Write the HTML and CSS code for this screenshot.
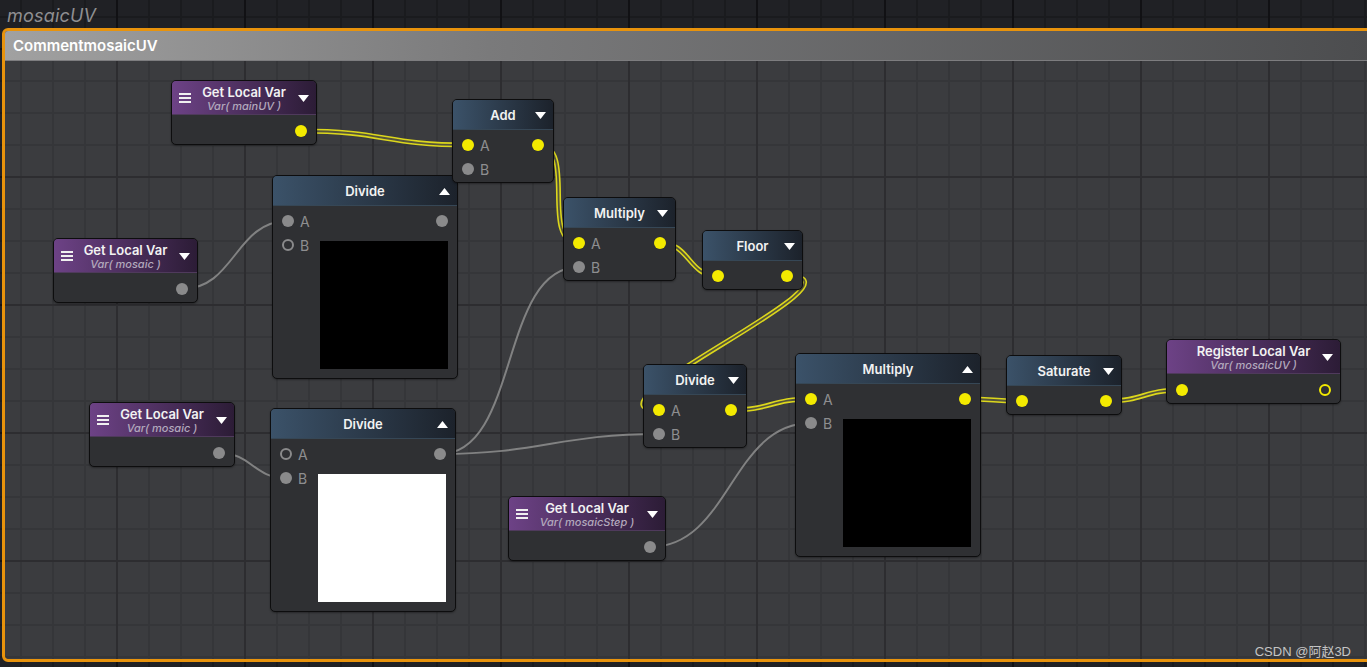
FILE: index.html
```html
<!DOCTYPE html>
<html>
<head>
<meta charset="utf-8">
<link rel="stylesheet" href="styles.css">
</head>
<body>
<div class="canvas">
  <div class="graph-title">mosaicUV</div>
  <div class="comment">
    <div class="comment-hdr">CommentmosaicUV</div>
  </div>

  <svg class="wires" width="1367" height="667" viewBox="0 0 1367 667">
    <g class="gray">
      <path d="M182,289 C235,289 235,221 288,221"/>
      <path d="M442,221 C460,221 450,169 468,169"/>
      <path d="M219,453 C252,453 253,478 286,478"/>
      <path d="M440,454 C520,454 499,267 579,267"/>
      <path d="M440,454 C540,454 559,434 659,434"/>
      <path d="M650,547 C730,547 731,423 811,423"/>
    </g>
    <g class="yel-outer">
      <path d="M301,131 C385,131 384,145 468,145"/>
      <path d="M538,145 C578,145 539,243 579,243"/>
      <path d="M660,243 C690,243 688,276 718,276"/>
      <path d="M787,276 C880,276 570,410 659,410"/>
      <path d="M731,410 C771,410 771,399 811,399"/>
      <path d="M965,399 C995,399 992,401 1022,401"/>
      <path d="M1106,401 C1146,401 1142,390 1182,390"/>
    </g>
    <g class="yel-inner">
      <path d="M301,131 C385,131 384,145 468,145"/>
      <path d="M538,145 C578,145 539,243 579,243"/>
      <path d="M660,243 C690,243 688,276 718,276"/>
      <path d="M787,276 C880,276 570,410 659,410"/>
      <path d="M731,410 C771,410 771,399 811,399"/>
      <path d="M965,399 C995,399 992,401 1022,401"/>
      <path d="M1106,401 C1146,401 1142,390 1182,390"/>
    </g>
  </svg>

  <!-- Get Local Var mainUV -->
  <div class="node n-mainuv">
    <div class="hdr purple">
      <span class="menu"><i></i><i></i><i></i></span>
      <span class="titles"><span class="title">Get Local Var</span><span class="sub">Var( mainUV )</span></span>
      <span class="arrow"><svg width="11" height="7" viewBox="0 0 11 7"><polygon points="0,0 11,0 5.5,7"/></svg></span>
    </div>
    <div class="body pbody">
      <div class="row"><span class="grow"></span><span class="pin y"></span></div>
    </div>
  </div>

  <!-- Divide top -->
  <div class="node n-divtop">
    <div class="hdr blue">
      <span></span><span class="title">Divide</span>
      <span class="arrow"><svg width="11" height="7" viewBox="0 0 11 7"><polygon points="0,7 11,7 5.5,0"/></svg></span>
    </div>
    <div class="body">
      <div class="row"><span class="pin g"></span><span class="lbl">A</span><span class="grow"></span><span class="pin g"></span></div>
      <div class="split">
        <div class="col"><div class="row"><span class="pin ring"></span><span class="lbl">B</span></div></div>
        <div class="preview black"></div>
      </div>
    </div>
  </div>

  <!-- Add -->
  <div class="node n-add">
    <div class="hdr blue">
      <span></span><span class="title">Add</span>
      <span class="arrow"><svg width="11" height="7" viewBox="0 0 11 7"><polygon points="0,0 11,0 5.5,7"/></svg></span>
    </div>
    <div class="body">
      <div class="row"><span class="pin y"></span><span class="lbl">A</span><span class="grow"></span><span class="pin y"></span></div>
      <div class="row"><span class="pin g"></span><span class="lbl">B</span></div>
    </div>
  </div>

  <!-- Get Local Var mosaic 1 -->
  <div class="node n-mosaic1">
    <div class="hdr purple">
      <span class="menu"><i></i><i></i><i></i></span>
      <span class="titles"><span class="title">Get Local Var</span><span class="sub">Var( mosaic )</span></span>
      <span class="arrow"><svg width="11" height="7" viewBox="0 0 11 7"><polygon points="0,0 11,0 5.5,7"/></svg></span>
    </div>
    <div class="body pbody">
      <div class="row"><span class="grow"></span><span class="pin g"></span></div>
    </div>
  </div>

  <!-- Multiply top -->
  <div class="node n-multtop">
    <div class="hdr blue">
      <span></span><span class="title">Multiply</span>
      <span class="arrow"><svg width="11" height="7" viewBox="0 0 11 7"><polygon points="0,0 11,0 5.5,7"/></svg></span>
    </div>
    <div class="body">
      <div class="row"><span class="pin y"></span><span class="lbl">A</span><span class="grow"></span><span class="pin y"></span></div>
      <div class="row"><span class="pin g"></span><span class="lbl">B</span></div>
    </div>
  </div>

  <!-- Floor -->
  <div class="node n-floor">
    <div class="hdr blue">
      <span></span><span class="title">Floor</span>
      <span class="arrow"><svg width="11" height="7" viewBox="0 0 11 7"><polygon points="0,0 11,0 5.5,7"/></svg></span>
    </div>
    <div class="body">
      <div class="row"><span class="pin y"></span><span class="grow"></span><span class="pin y"></span></div>
    </div>
  </div>

  <!-- Get Local Var mosaic 2 -->
  <div class="node n-mosaic2">
    <div class="hdr purple">
      <span class="menu"><i></i><i></i><i></i></span>
      <span class="titles"><span class="title">Get Local Var</span><span class="sub">Var( mosaic )</span></span>
      <span class="arrow"><svg width="11" height="7" viewBox="0 0 11 7"><polygon points="0,0 11,0 5.5,7"/></svg></span>
    </div>
    <div class="body pbody">
      <div class="row"><span class="grow"></span><span class="pin g"></span></div>
    </div>
  </div>

  <!-- Divide bottom -->
  <div class="node n-divbot">
    <div class="hdr blue">
      <span></span><span class="title">Divide</span>
      <span class="arrow"><svg width="11" height="7" viewBox="0 0 11 7"><polygon points="0,7 11,7 5.5,0"/></svg></span>
    </div>
    <div class="body">
      <div class="row"><span class="pin ring"></span><span class="lbl">A</span><span class="grow"></span><span class="pin g"></span></div>
      <div class="split">
        <div class="col"><div class="row"><span class="pin g"></span><span class="lbl">B</span></div></div>
        <div class="preview white"></div>
      </div>
    </div>
  </div>

  <!-- Divide middle -->
  <div class="node n-divmid">
    <div class="hdr blue">
      <span></span><span class="title">Divide</span>
      <span class="arrow"><svg width="11" height="7" viewBox="0 0 11 7"><polygon points="0,0 11,0 5.5,7"/></svg></span>
    </div>
    <div class="body">
      <div class="row"><span class="pin y"></span><span class="lbl">A</span><span class="grow"></span><span class="pin y"></span></div>
      <div class="row"><span class="pin g"></span><span class="lbl">B</span></div>
    </div>
  </div>

  <!-- Multiply big -->
  <div class="node n-multbig">
    <div class="hdr blue">
      <span></span><span class="title">Multiply</span>
      <span class="arrow"><svg width="11" height="7" viewBox="0 0 11 7"><polygon points="0,7 11,7 5.5,0"/></svg></span>
    </div>
    <div class="body">
      <div class="row"><span class="pin y"></span><span class="lbl">A</span><span class="grow"></span><span class="pin y"></span></div>
      <div class="split">
        <div class="col"><div class="row"><span class="pin g"></span><span class="lbl">B</span></div></div>
        <div class="preview black"></div>
      </div>
    </div>
  </div>

  <!-- Get Local Var mosaicStep -->
  <div class="node n-step">
    <div class="hdr purple">
      <span class="menu"><i></i><i></i><i></i></span>
      <span class="titles"><span class="title">Get Local Var</span><span class="sub">Var( mosaicStep )</span></span>
      <span class="arrow"><svg width="11" height="7" viewBox="0 0 11 7"><polygon points="0,0 11,0 5.5,7"/></svg></span>
    </div>
    <div class="body pbody">
      <div class="row"><span class="grow"></span><span class="pin g"></span></div>
    </div>
  </div>

  <!-- Saturate -->
  <div class="node n-sat">
    <div class="hdr blue">
      <span></span><span class="title">Saturate</span>
      <span class="arrow"><svg width="11" height="7" viewBox="0 0 11 7"><polygon points="0,0 11,0 5.5,7"/></svg></span>
    </div>
    <div class="body">
      <div class="row"><span class="pin y"></span><span class="grow"></span><span class="pin y"></span></div>
    </div>
  </div>

  <!-- Register Local Var -->
  <div class="node n-reg">
    <div class="hdr purple">
      <span></span>
      <span class="titles"><span class="title">Register Local Var</span><span class="sub">Var( mosaicUV )</span></span>
      <span class="arrow"><svg width="11" height="7" viewBox="0 0 11 7"><polygon points="0,0 11,0 5.5,7"/></svg></span>
    </div>
    <div class="body pbody">
      <div class="row"><span class="pin y"></span><span class="grow"></span><span class="pin yring"></span></div>
    </div>
  </div>

  <div class="watermark">CSDN @阿赵3D</div>
</div>
</body>
</html>
```

FILE: styles.css
```css
html, body {
  margin: 0;
  padding: 0;
  background: #1f2024;
}

.canvas {
  position: relative;
  width: 1367px;
  height: 667px;
  overflow: hidden;
  font-family: Inter, "Noto Sans", sans-serif;
  background-color: #202125;
  background-image:
    linear-gradient(to right, #111114 2px, transparent 2px),
    linear-gradient(to bottom, #111114 2px, transparent 2px),
    linear-gradient(to right, #1a1b1e 2px, transparent 2px),
    linear-gradient(to bottom, #1a1b1e 2px, transparent 2px);
  background-size: 128px 128px, 128px 128px, 32px 32px, 32px 32px;
  background-position: 116px 0, 0 48px, 20px 0, 0 16px;
}

.graph-title {
  position: absolute;
  left: 7px;
  top: 5px;
  font-size: 18px;
  font-style: italic;
  color: #8f8f91;
  letter-spacing: 0.2px;
}

.comment {
  position: absolute;
  left: 2px;
  top: 28px;
  width: 1390px;
  height: 634px;
  box-sizing: border-box;
  border: 3px solid #e8930c;
  border-radius: 6px;
  background: rgba(255, 255, 255, 0.12);
  overflow: hidden;
}

.comment-hdr {
  height: 29px;
  border-bottom: 1px solid #7d7d7f;
  background: linear-gradient(to right, #a1a1a1 0%, #7a7a7b 35%, #4b4c4e 100%);
  color: #ffffff;
  font-weight: 600;
  font-size: 15px;
  line-height: 29px;
  padding-left: 8px;
}

.wires {
  position: absolute;
  left: 0;
  top: 0;
}
.wires path {
  fill: none;
}
.wires .gray path {
  stroke: #8e8e8e;
  stroke-width: 2;
  opacity: 0.85;
}
.wires .yel-outer path {
  stroke: #dcd71c;
  stroke-width: 5;
}
.wires .yel-inner path {
  stroke: #56553a;
  stroke-width: 1.8;
}

/* nodes */
.node {
  position: absolute;
  box-sizing: border-box;
  border: 1px solid #0d0d0e;
  border-radius: 5px;
  background: #2f3033;
  overflow: hidden;
  box-shadow: 0 1px 2px rgba(0, 0, 0, 0.35);
}

.hdr {
  display: grid;
  grid-template-columns: 26px 1fr 26px;
  align-items: center;
  color: #f2f2f2;
}
.hdr.blue {
  height: 30px;
  background: linear-gradient(to right, #3b5269, #1c222b);
  box-shadow: inset 0 -1px 0 #364756;
}
.hdr.purple {
  height: 34px;
  background: linear-gradient(to right, #6d4286, #2c1c36);
  box-shadow: inset 0 -1px 0 #4f3a5c;
}

.title {
  text-align: center;
  font-size: 13px;
  font-weight: 600;
  line-height: 15px;
  white-space: nowrap;
}
.titles {
  display: flex;
  flex-direction: column;
  align-items: center;
  padding-top: 1px;
}
.sub {
  font-size: 11px;
  font-style: italic;
  font-weight: 500;
  line-height: 12px;
  color: #b3a9bd;
  white-space: nowrap;
}

.arrow {
  display: flex;
  justify-content: center;
  align-items: center;
}
.arrow svg polygon {
  fill: #ffffff;
}

.menu {
  display: flex;
  flex-direction: column;
  align-items: center;
  gap: 2px;
}
.menu i {
  display: block;
  width: 12px;
  height: 2px;
  background: #f0f0f0;
}

.body {
  padding: 3px 0 1px;
}
.body.pbody {
  padding: 4px 0 1px;
}

.row {
  height: 24px;
  display: flex;
  align-items: center;
  padding: 0 9px;
}
.grow {
  flex: 1;
}
.lbl {
  margin-left: 6px;
  font-size: 14px;
  color: #8e8e90;
}

.pin {
  width: 12px;
  height: 12px;
  border-radius: 50%;
  box-sizing: border-box;
  flex: none;
}
.pin.y {
  background: #f3ea00;
}
.pin.g {
  background: #8a8a8b;
}
.pin.ring {
  border: 2.5px solid #8a8a8b;
}
.pin.yring {
  border: 2.5px solid #f3ea00;
}

.split {
  display: flex;
  justify-content: space-between;
  padding-right: 9px;
}
.preview {
  width: 128px;
  height: 128px;
  margin: 8px 0;
}
.preview.black { background: #000000; }
.preview.white { background: #ffffff; }

/* node placement on the graph canvas */
.n-mainuv  { left: 171px;  top: 80px;  width: 146px; }
.n-divtop  { left: 272px;  top: 175px; width: 186px; }
.n-add     { left: 452px;  top: 99px;  width: 102px; }
.n-mosaic1 { left: 53px;   top: 238px; width: 145px; }
.n-multtop { left: 563px;  top: 197px; width: 113px; }
.n-floor   { left: 702px;  top: 230px; width: 101px; }
.n-mosaic2 { left: 89px;   top: 402px; width: 146px; }
.n-divbot  { left: 270px;  top: 408px; width: 186px; }
.n-divmid  { left: 643px;  top: 364px; width: 104px; }
.n-multbig { left: 795px;  top: 353px; width: 186px; }
.n-step    { left: 508px;  top: 496px; width: 158px; }
.n-sat     { left: 1006px; top: 355px; width: 116px; }
.n-reg     { left: 1166px; top: 339px; width: 175px; }

.watermark {
  position: absolute;
  right: 16px;
  top: 641px;
  font-family: "Liberation Sans", "Noto Sans CJK SC", sans-serif;
  font-size: 13px;
  color: #c4c4c4;
}
```
